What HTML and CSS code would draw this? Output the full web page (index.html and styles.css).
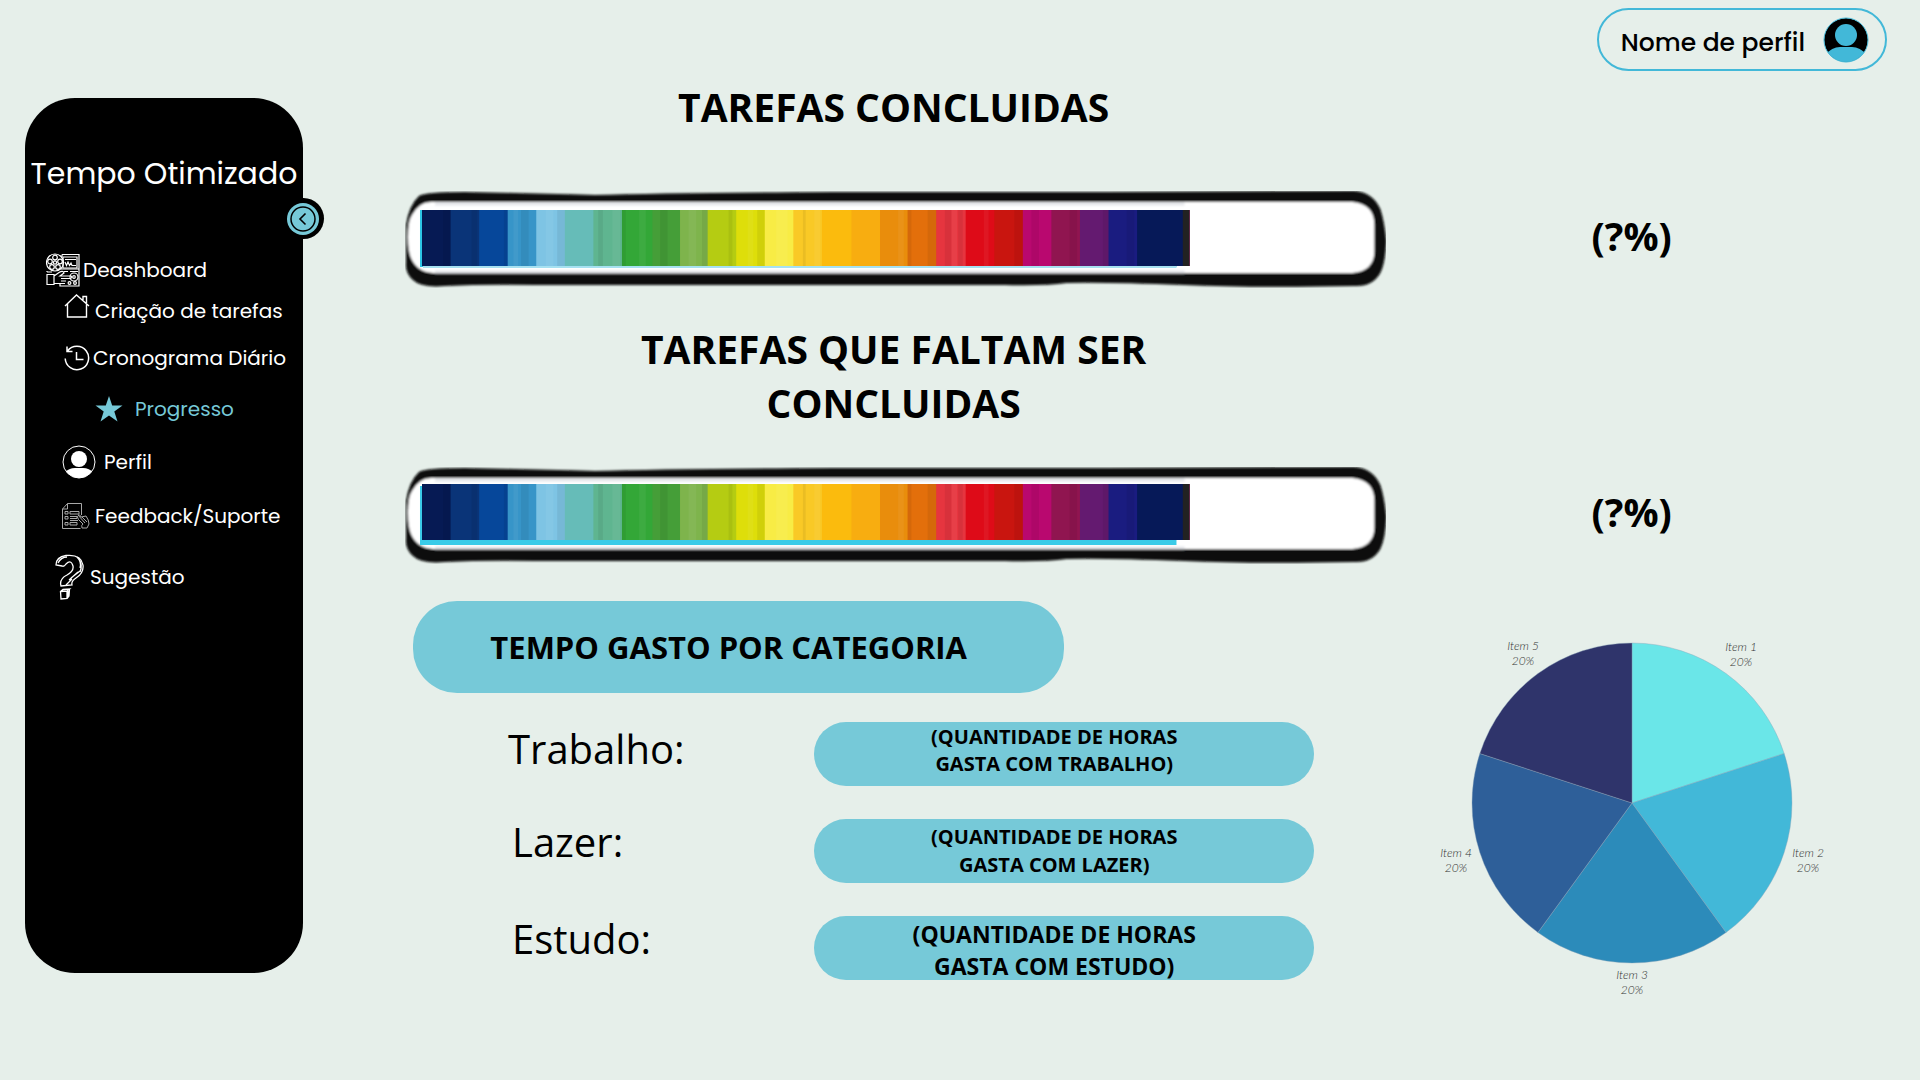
FILE: index.html
```html
<!DOCTYPE html>
<html lang="pt-BR">
<head>
<meta charset="utf-8">
<title>Tempo Otimizado - Progresso</title>
<meta name="viewport" content="width=device-width, initial-scale=1">
<link rel="stylesheet" href="styles.css">
</head>
<body>
<svg class="defs" width="0" height="0" aria-hidden="true">
  <defs>
    <filter id="soft" x="-2%" y="-10%" width="104%" height="120%"><feGaussianBlur stdDeviation="1"/></filter>
    <symbol id="frame" viewBox="0 0 982 97" preserveAspectRatio="none">
      <g filter="url(#soft)">
        <path d="M14 5Q20 1 60 1Q110 2 190 4Q260 2 430 1L700 1L950 0Q968 1 976 18Q980 30 982 50Q981 72 976 82Q968 96 950 95Q850 97 780 94Q700 91 662 92Q640 95 600 94L130 94Q80 93 40 95Q16 97 8 89Q0 82 1 72L1 34Q4 14 14 5Z" fill="#090909"/>
        <path d="M26 11H948Q970 13 970 34V60Q970 80 948 82H28Q12 81 6 67Q3 60 3 46Q3 30 7 24Q14 11 26 11Z" fill="#fff"/>
        <path d="M30 13H780M30 81H780" stroke="#e4e6ea" stroke-width="3"/>
      </g>
    </symbol>
    <symbol id="bands" viewBox="0 0 806 10" preserveAspectRatio="none">
      <path fill="#061a54" d="M0 0h806v10H0z"/>
      <path fill="#0a3478" d="M30 0h776v10H30z"/>
      <path fill="#06479a" d="M60 0h746v10H60z"/>
      <path fill="#3795c8" d="M90 0h716v10H90z"/>
      <path fill="#7ec4e4" d="M120 0h686v10H120z"/>
      <path fill="#66bcb8" d="M150 0h656v10H150z"/>
      <path fill="#5fb590" d="M180 0h626v10H180z"/>
      <path fill="#33a737" d="M210 0h596v10H210z"/>
      <path fill="#459e38" d="M242 0h564v10H242z"/>
      <path fill="#7eb44c" d="M271 0h535v10H271z"/>
      <path fill="#b5cc12" d="M300 0h506v10H300z"/>
      <path fill="#dede0a" d="M330 0h476v10H330z"/>
      <path fill="#f8ec45" d="M360 0h446v10H360z"/>
      <path fill="#f9c926" d="M390 0h416v10H390z"/>
      <path fill="#fbbb0d" d="M420 0h386v10H420z"/>
      <path fill="#f8ad10" d="M451 0h355v10H451z"/>
      <path fill="#e98d0c" d="M481 0h325v10H481z"/>
      <path fill="#e36f0b" d="M510 0h296v10H510z"/>
      <path fill="#e6353f" d="M540 0h266v10H540z"/>
      <path fill="#de0b18" d="M571 0h235v10H571z"/>
      <path fill="#c9150f" d="M601 0h205v10H601z"/>
      <path fill="#b9086f" d="M631 0h175v10H631z"/>
      <path fill="#901550" d="M661 0h145v10H661z"/>
      <path fill="#641a70" d="M691 0h115v10H691z"/>
      <path fill="#1a1c80" d="M721 0h85v10H721z"/>
      <path fill="#061958" d="M751 0h55v10H751z"/>
      <path fill="#222" d="M799 0h7v10H799z"/>
      <path fill="#000" opacity=".06" d="M22 0h8v10h-8zM52 0h6v10h-6zM86 0h4v10h-4zM104 0h8v10h-8zM142 0h8v10h-8zM185 0h5v10h-5zM210 0h4v10h-4zM250 0h8v10h-8zM294 0h6v10h-6zM322 0h4v10h-4zM352 0h8v10h-8zM400 0h3v10h-3zM510 0h4v10h-4zM531 0h9v10h-9zM549 0h7v10h-7zM563 0h5v10h-5zM622 0h9v10h-9zM640 0h8v10h-8zM680 0h8v10h-8zM715 0h6v10h-6zM740 0h8v10h-8z"/>
      <path fill="#fff" opacity=".05" d="M96 0h5v10h-5zM130 0h8v10h-8zM200 0h8v10h-8zM228 0h7v10h-7zM280 0h8v10h-8zM342 0h6v10h-6zM372 0h12v10h-12zM412 0h6v10h-6zM500 0h6v10h-6zM556 0h6v10h-6zM590 0h5v10h-5z"/>
    </symbol>
  </defs>
</svg>

<header class="topbar">
  <a class="profile" href="#perfil"><span class="profile-name">Nome de perfil</span>
    <svg class="avatar" viewBox="0 0 46 46" aria-hidden="true">
      <clipPath id="av"><circle cx="23" cy="23" r="22"/></clipPath>
      <g clip-path="url(#av)"><circle cx="23" cy="23" r="22"/><circle cx="23" cy="18" r="11" fill="#42b8d8"/><path d="M2 46V38Q9 30 17 30H29Q37 30 44 38V46Z" fill="#42b8d8"/></g>
      <circle cx="23" cy="23" r="22" fill="none" stroke="#42b8d8"/>
    </svg>
  </a>
</header>

<div class="layout">
  <aside class="sidebar">
    <p class="brand">Tempo Otimizado</p>
    <button class="toggle" type="button" aria-label="Recolher menu">
      <svg viewBox="0 0 40 40" aria-hidden="true"><circle cx="20" cy="20" r="16" fill="#76c9d8"/><circle cx="20" cy="20" r="12" fill="none" stroke="#000" stroke-width="1.500"/><path d="M22.500 14.500L17 20L22.500 25.500" fill="none" stroke="#000" stroke-width="1.600"/></svg>
    </button>
    <nav>
      <ul class="menu">
        <li class="item item-root"><a href="#dashboard">
          <svg width="34" height="34" viewBox="0 0 34 34" fill="none" stroke="#fff" stroke-width="1.200" aria-hidden="true"><path d="M16 1.500H33V33H14V30M16 4V1.500M14.500 16H33"/><circle cx="9" cy="9.500" r="8.500"/><circle cx="9" cy="9.500" r="1.600"/><circle cx="9" cy="4.500" r="2.300"/><circle cx="4" cy="8.500" r="2.300"/><circle cx="14" cy="8.500" r="2.300"/><circle cx="6" cy="14" r="2.300"/><circle cx="12" cy="14" r="2.300"/><path d="M17 4H31V15H17ZM19 6.500H30M19 9L20.500 12.500L22 9L23.500 12.500L25 10L26 12.500H30" /><path d="M1 19H6M1 21.500H8V31.500H1ZM8 23L13 19.500Q17 17 18 20L14 23H25Q27 25 24 25.500H18M19 28H16M19 30.500H8M15 25.500H21M15 28H20M1 19V18"/><circle cx="28" cy="24" r="4"/><circle cx="28" cy="24" r="1.300"/><circle cx="23.500" cy="30" r="1.400"/><circle cx="29" cy="30" r="1.400"/><path d="M18 18.500H22M24 18.500H32"/></svg>
          Deashboard</a></li>
        <li class="item item-home"><a href="#tarefas">
          <svg width="26" height="36" viewBox="0 0 26 36" fill="none" stroke="#fff" stroke-width="1.400" aria-hidden="true"><path d="M1 13L12.500 2L25 13M3.500 11V24H22.500V11M19 7V3.500H22.500V10"/></svg>
          Criação de tarefas</a></li>
        <li class="item item-clock"><a href="#cronograma">
          <svg width="26" height="26" viewBox="0 0 26 26" fill="none" stroke="#fff" stroke-width="1.500" aria-hidden="true"><path d="M3.500 6A11.700 11.700 0 1 1 1.200 13.500M3 1.500V6.500H8.500M12.500 7V14.500H19.500"/></svg>
          Cronograma Diário</a></li>
        <li class="item item-star"><a href="#progresso" aria-current="page">
          <svg width="28" height="28" viewBox="0 0 28 28" fill="#76c9d8" aria-hidden="true"><path d="M14 1L17.200 10.500H27.500L19.300 16.500L22.500 26.500L14 20.500L5.500 26.500L8.700 16.500L.5 10.500H10.800Z"/></svg>
          Progresso</a></li>
        <li class="item item-user"><a href="#perfil">
          <svg width="34" height="34" viewBox="0 0 34 34" aria-hidden="true"><clipPath id="us"><circle cx="17" cy="17" r="16"/></clipPath><g clip-path="url(#us)" fill="#fff"><circle cx="17" cy="14" r="8"/><path d="M2 34V28Q7 23 13 23H21Q27 23 32 28V34Z"/></g><circle cx="17" cy="17" r="16" fill="none" stroke="#fff"/></svg>
          Perfil</a></li>
        <li class="item item-doc"><a href="#feedback">
          <svg width="28" height="26" viewBox="0 0 28 26" fill="none" stroke="#a8a8a8" aria-hidden="true"><path d="M5.500.5H19.500V12M.5 6V25.500H18.500M.5 6L5.500.5V6ZM3 8.500H6V11H3ZM3 13.500H6V16H3ZM3 19.500H6V22H3ZM8 8.500H17V11H8ZM8 13.500H15V15.500H8M8 17.500H16M8 19.500H15V22H8ZM16 12L23 20M15 13L16.500 16.500L21 21M16 12Q18 11 19 14L24 13Q27 17 27 21L25 25H20Q19 22 21 21M20 14L25 19"/></svg>
          Feedback/Suporte</a></li>
        <li class="item item-help"><a href="#sugestao">
          <svg width="30" height="46" viewBox="0 0 30 46" fill="none" stroke="#fff" stroke-width="1.300" aria-hidden="true"><path d="M1 11Q1 3 11 1.500Q26 0 28 11Q29 19 21 24Q16 27 17 31L6 32Q4 25 12 21Q19 17 18 12Q16 5 11 10Q9 13 7 12Z"/><path d="M3 9Q6 3 12 3M22 3Q27 8 25 14M24 5Q28 11 25 18M23 18L14 26M25 17L16 24M17 25L11 31"/><path d="M5.500 37.500L12 37V44.500L6 45ZM5.500 37.500L8 35.500L14.500 35L12 37M14.500 35L14 42L12 44.500M13 37V43"/></svg>
          Sugestão</a></li>
      </ul>
    </nav>
  </aside>

  <main class="content">
    <h2 class="title">TAREFAS CONCLUIDAS</h2>
    <svg class="track track-first" viewBox="0 0 982 97" preserveAspectRatio="none" role="img" aria-label="Tarefas concluidas">
      <use href="#frame" width="982" height="97"/>
      <path d="M15 19H772V76H15Z" fill="#2cc6e6"/><path d="M18 75H772V77H18Z" fill="#a6e1f1"/>
      <use href="#bands" x="17" y="19" width="768" height="56"/>
    </svg>
    <p class="percent">(?%)</p>

    <h2 class="title title-second">TAREFAS QUE FALTAM SER CONCLUIDAS</h2>
    <svg class="track track-second" viewBox="0 0 982 97" preserveAspectRatio="none" role="img" aria-label="Tarefas que faltam ser concluidas">
      <use href="#frame" width="982" height="97"/>
      <path d="M15 19H772V78H15Z" fill="#3acbe8"/>
      <use href="#bands" x="17" y="17" width="768" height="56"/>
    </svg>
    <p class="percent">(?%)</p>

    <section class="categories">
      <h2 class="pill heading">TEMPO GASTO POR CATEGORIA</h2>
      <dl class="hours">
        <dt>Trabalho:</dt>
        <dd class="pill value value-raised">(QUANTIDADE DE HORAS<br>GASTA COM TRABALHO)</dd>
        <dt>Lazer:</dt>
        <dd class="pill value">(QUANTIDADE DE HORAS<br>GASTA COM LAZER)</dd>
        <dt>Estudo:</dt>
        <dd class="pill value value-large">(QUANTIDADE DE HORAS<br>GASTA COM ESTUDO)</dd>
      </dl>
    </section>

    <svg class="pie" viewBox="0 0 420 360" role="img" aria-label="Tempo por categoria">
      <g stroke="#8aa5b8" stroke-width=".4">
        <path fill="#6ae6e8" d="M210 163V3A160 160 0 0 1 362.170 113.560Z"/>
        <path fill="#42b8d8" d="M210 163L362.170 113.560A160 160 0 0 1 304.050 292.440Z"/>
        <path fill="#2c8bba" d="M210 163L304.050 292.440A160 160 0 0 1 115.950 292.440Z"/>
        <path fill="#2e5f99" d="M210 163L115.950 292.440A160 160 0 0 1 57.830 113.560Z"/>
        <path fill="#2f346b" d="M210 163L57.830 113.560A160 160 0 0 1 210 3Z"/>
      </g>
      <g class="pie-label">
        <text x="319" y="11">Item 1</text><text x="319" y="26">20%</text>
        <text x="386" y="217">Item 2</text><text x="386" y="232">20%</text>
        <text x="210" y="339">Item 3</text><text x="210" y="354">20%</text>
        <text x="34" y="217">Item 4</text><text x="34" y="232">20%</text>
        <text x="101" y="10">Item 5</text><text x="101" y="25">20%</text>
      </g>
    </svg>
  </main>
</div>
</body>
</html>
```
FILE: styles.css
```css
* { box-sizing: border-box; }

body {
  margin: 0;
  background: #e6efea;
  color: #000;
  font-family: "Open Sans", "Noto Sans", sans-serif;
}

h2, p, ul, dl, dd { margin: 0; padding: 0; }

.defs { position: absolute; }

.topbar {
  display: flex;
  justify-content: flex-end;
  padding: 8px 33px 0 0;
}

.profile {
  display: flex;
  align-items: center;
  gap: 18px;
  height: 63px;
  padding: 0 16px 0 22px;
  border: 2px solid #42b8d8;
  border-radius: 32px;
  color: #000;
  font: 500 25px/36px Poppins, Inter, sans-serif;
  text-decoration: none;
  white-space: nowrap;
}

.profile-name { padding-top: 6px; }

.avatar { width: 46px; height: 46px; }

.layout {
  display: grid;
  grid-template-columns: 278px minmax(0, 1fr);
  padding: 0 43px 0 25px;
}

.sidebar {
  position: relative;
  align-self: start;
  min-height: 81vh;
  margin-top: 27px;
  padding-top: 52px;
  border-radius: 50px;
  background: #000;
  color: #fff;
  font-family: Poppins, Inter, sans-serif;
  white-space: nowrap;
}

.brand {
  font-size: 30px;
  font-weight: 400;
  line-height: 48px;
  text-align: center;
}

.toggle {
  position: absolute;
  top: 100px;
  right: -21px;
  width: 41px;
  height: 41px;
  padding: 0;
  border: 0;
  border-radius: 50%;
  background: #000;
}

.toggle svg { display: block; width: 40px; height: 40px; }

.menu {
  margin-top: 52px;
  list-style: none;
}

.item a {
  display: flex;
  align-items: center;
  gap: 5px;
  height: 54px;
  color: #fff;
  font-size: 20px;
  font-weight: 400;
  text-decoration: none;
}

.item svg { flex: none; }
.item a[aria-current] { color: #76c9d8; }
.item-root a { height: 40px; gap: 3px; padding-left: 21px; }
.item-home a { height: 42px; padding-left: 39px; }
.item-clock a { height: 51px; gap: 3px; padding-left: 39px; }
.item-star a { height: 52px; gap: 12px; padding-left: 70px; }
.item-user a { gap: 8px; padding-left: 37px; }
.item-doc a { padding-left: 37px; }
.item-help a { height: 68px; padding-left: 30px; }

.content {
  display: grid;
  grid-template-columns: minmax(0, 2fr) minmax(0, 1fr);
  align-items: start;
  padding: 9px 0 40px 102px;
}

.title {
  grid-column: 1;
  padding: 0 204px 0 200px;
  font-size: 39px;
  font-weight: 700;
  line-height: 54px;
  text-align: center;
}

.title-second { margin-top: 34px; }

.track {
  display: block;
  grid-column: 1;
  width: 100%;
  height: 97px;
}

.track-first { margin-top: 57px; }
.track-second { margin-top: 37px; }

.percent {
  grid-column: 2;
  align-self: end;
  padding-bottom: 4px;
  font-size: 39px;
  font-weight: 700;
  line-height: 97px;
  text-align: center;
}

.categories {
  grid-column: 1;
  margin-top: 37px;
}

.pill {
  display: flex;
  align-items: center;
  justify-content: center;
  border-radius: 32px;
  background: #76c9d8;
  font-weight: 700;
  text-align: center;
}

.heading {
  height: 92px;
  margin: 0 322px 0 8px;
  padding-right: 20px;
  border-radius: 44px;
  font-size: 31px;
}

.hours {
  display: grid;
  grid-template-columns: minmax(0, 9fr) minmax(0, 11fr);
  row-gap: 33px;
  margin-top: 29px;
  padding-right: 72px;
}

.hours dt {
  padding-left: 107px;
  font-size: 40px;
  line-height: 46px;
}

.hours dt:first-of-type {
  padding-left: 103px;
  line-height: 54px;
}

.value {
  height: 64px;
  padding-right: 20px;
  font-size: 20px;
  line-height: 28px;
}

.value-raised { padding-bottom: 8px; line-height: 27px; }
.value-large { padding-top: 4px; font-size: 23px; line-height: 32px; }

.pie {
  grid-column: 2;
  justify-self: center;
  width: 420px;
  max-width: 100%;
  margin-top: 76px;
  overflow: visible;
}

.pie-label {
  fill: #333;
  font: italic 300 12px Lato, sans-serif;
  text-anchor: middle;
}
```
